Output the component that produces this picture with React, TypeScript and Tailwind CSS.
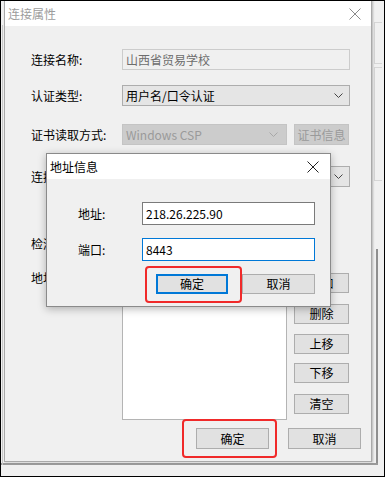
import React from "react";

function Chevron({ color = "#444" }: { color?: string }) {
  return (
    <svg width="9" height="5" viewBox="0 0 9 5" className="shrink-0">
      <path d="M0.5 0.5 L4.5 4.5 L8.5 0.5" fill="none" stroke={color} strokeWidth="1" />
    </svg>
  );
}

function CloseX({ color, size = 12 }: { color: string; size?: number }) {
  return (
    <svg width={size} height={size} viewBox="0 0 12 12" className="shrink-0">
      <path d="M0.5 0.5 L11.5 11.5 M11.5 0.5 L0.5 11.5" fill="none" stroke={color} strokeWidth="1" />
    </svg>
  );
}

function Btn({ children, className = "" }: { children: React.ReactNode; className?: string }) {
  return (
    <div
      className={
        "flex items-center justify-center border border-[#adadad] bg-[#e1e1e1] text-[12px] leading-none text-black " +
        className
      }
    >
      {children}
    </div>
  );
}

function HiddenLabel({ children, className = "" }: { children: React.ReactNode; className?: string }) {
  return (
    <div className={"w-[91px] shrink-0 " + className}>
      <div className="w-[15px] overflow-hidden whitespace-nowrap">{children}</div>
    </div>
  );
}

export default function App() {
  return (
    <div className="relative h-[477px] w-[385px] overflow-hidden border border-black bg-[#f0f0f0] font-['Noto_Sans_CJK_SC',sans-serif] text-[12px] text-black">
      {/* background window fragments */}
      <div className="absolute left-[373px] top-[21px] h-[42px] w-[8px] border border-r-0 border-[#d6d6d6]" />
      <div className="absolute left-[373px] top-[66px] h-[114px] w-[8px] border border-r-0 border-[#d6d6d6]" />
      <div className="absolute left-[375px] top-[248px] h-[216px] w-[2px] bg-[#8f8f8f]" />
      <div className="absolute left-0 top-[462px] h-[2px] w-[377px] bg-[#9a9a9a]" />
      <div className="absolute left-[1px] top-[24px] h-[440px] w-[1px] bg-[#c8c8c8]" />

      {/* main dialog */}
      <div className="absolute left-[3px] top-[-1px] flex h-[462px] w-[368px] flex-col border border-[#a9a9a9] bg-[#f0f0f0] shadow-[1px_0_2px_rgba(0,0,0,0.25)]">
        <div className="flex h-[25px] items-center justify-between bg-white pl-[3px] pr-[10px]">
          <span className="text-[12px] text-[#9c9c9c]">连接属性</span>
          <CloseX color="#8a8a8a" size={12} />
        </div>
        <div className="flex flex-col pl-[26px] pt-[23px]">
          <div className="flex h-[21px] items-center">
            <span className="w-[91px]">连接名称:</span>
            <div className="flex h-[21px] w-[228px] items-center border border-[#cccccc] bg-[#f0f0f0] px-[3px] text-[#6d6d6d]">
              山西省贸易学校
            </div>
          </div>
          <div className="mt-[15px] flex h-[21px] items-center">
            <span className="w-[91px]">认证类型:</span>
            <div className="flex h-[21px] w-[228px] items-center justify-between border border-[#adadad] bg-[#e5e5e5] pl-[3px] pr-[6px]">
              <span>用户名/口令认证</span>
              <Chevron />
            </div>
          </div>
          <div className="mt-[18px] flex h-[21px] items-center">
            <span className="w-[91px]">证书读取方式:</span>
            <div className="flex h-[21px] w-[165px] items-center justify-between border border-[#c4c4c4] bg-[#cccccc] pl-[3px] pr-[8px] text-[#9a9a9a]">
              <span>Windows CSP</span>
              <Chevron color="#a8a8a8" />
            </div>
            <div className="ml-[7px] flex h-[21px] w-[55px] items-center justify-center border border-[#c4c4c4] bg-[#cccccc] text-[#9a9a9a]">
              证书信息
            </div>
          </div>
          <div className="mt-[21px] flex h-[21px] items-center">
            <HiddenLabel>连接方式:</HiddenLabel>
            <div className="flex h-[21px] w-[228px] items-center justify-end border border-[#adadad] bg-[#e5e5e5] pr-[6px]">
              <Chevron />
            </div>
          </div>
          <div className="mt-[46px] flex h-[21px] items-center">
            <HiddenLabel>检测间隔:</HiddenLabel>
          </div>
          <div className="mt-[19px] flex items-start">
            <HiddenLabel className="-mt-[4px] leading-[18px]">地址列表:</HiddenLabel>
            <div className="h-[147px] w-[165px] border border-[#b4b4b4] bg-white" />
            <div className="ml-[7px] flex flex-col">
              <Btn className="h-[20px] w-[55px]">添加</Btn>
              <Btn className="mt-[11px] h-[20px] w-[55px]">删除</Btn>
              <Btn className="mt-[10px] h-[20px] w-[55px]">上移</Btn>
              <Btn className="mt-[9px] h-[20px] w-[55px]">下移</Btn>
              <Btn className="mt-[11px] h-[20px] w-[55px]">清空</Btn>
            </div>
          </div>
          <div className="mt-[8px] flex justify-end gap-[19px] pr-[10px]">
            <Btn className="h-[21px] w-[73px]">确定</Btn>
            <Btn className="h-[21px] w-[73px]">取消</Btn>
          </div>
        </div>
      </div>

      {/* sub dialog */}
      <div className="absolute left-[45px] top-[152px] flex h-[154px] w-[285px] flex-col border border-[#8a8a8a] bg-[#f0f0f0] shadow-[0_2px_8px_rgba(0,0,0,0.28)]">
        <div className="flex h-[25px] items-center justify-between bg-white pl-[3px] pr-[11px]">
          <span className="text-[12px] text-black">地址信息</span>
          <CloseX color="#222" size={12} />
        </div>
        <div className="flex flex-col pl-[31px] pt-[23px]">
          <div className="flex h-[23px] items-center">
            <span className="w-[64px]">地址:</span>
            <div className="flex h-[23px] w-[173px] items-center border border-[#7a7a7a] bg-white px-[3px]">
              218.26.225.90
            </div>
          </div>
          <div className="mt-[13px] flex h-[23px] items-center">
            <span className="w-[64px]">端口:</span>
            <div className="flex h-[23px] w-[173px] items-center border border-[#0078d7] bg-white px-[3px]">
              8443
            </div>
          </div>
          <div className="mt-[13px] flex gap-[14px] pl-[78px]">
            <div className="flex h-[20px] w-[72px] items-center justify-center border-2 border-[#0078d7] bg-[#e1e1e1] leading-none">
              确定
            </div>
            <Btn className="h-[20px] w-[73px]">取消</Btn>
          </div>
        </div>
      </div>

      {/* red highlight boxes */}
      <div className="absolute left-[144px] top-[265px] h-[37px] w-[97px] rounded-[4px] border-2 border-[#f02a2a]" />
      <div className="absolute left-[181px] top-[418px] h-[39px] w-[95px] rounded-[4px] border-2 border-[#f02a2a]" />
    </div>
  );
}
